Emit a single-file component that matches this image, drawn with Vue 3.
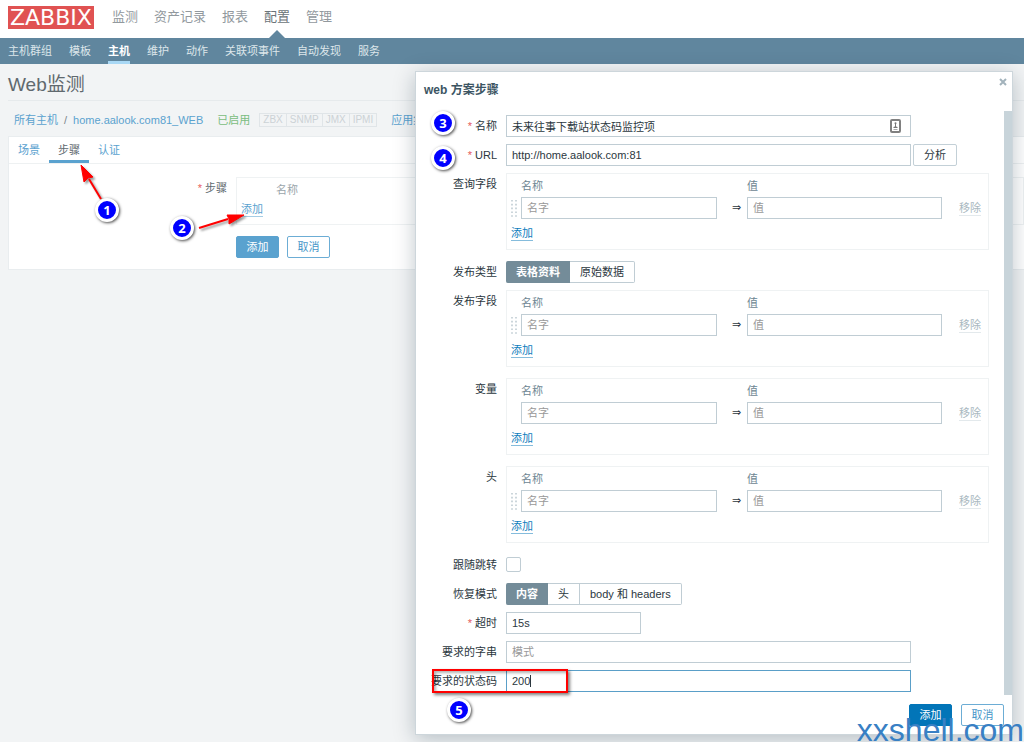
<script setup>
import { ref } from 'vue'

const mainMenu = ['监测', '资产记录', '报表', '配置', '管理']
const subMenu = ['主机群组', '模板', '主机', '维护', '动作', '关联项事件', '自动发现', '服务']
const interfaces = ['ZBX', 'SNMP', 'JMX', 'IPMI']
const tabs = ['场景', '步骤', '认证']

const activeTab = ref('步骤')
const dialogOpen = ref(true)

const name = ref('未来往事下载站状态码监控项')
const url = ref('http://home.aalook.com:81')
const postType = ref('form')
const followRedirects = ref(false)
const retrieveMode = ref('content')
const timeout = ref('15s')
const requiredString = ref('')
const statusCodes = ref('200')

const postTypes = [
  { value: 'form', label: '表格资料' },
  { value: 'raw', label: '原始数据' }
]

const retrieveModes = [
  { value: 'content', label: '内容' },
  { value: 'headers', label: '头' },
  { value: 'both', label: 'body 和 headers' }
]

const queryFields = { id: 'query', label: '查询字段', sortable: true }
const pairGroups = [
  { id: 'post', label: '发布字段', sortable: true },
  { id: 'variables', label: '变量', sortable: false },
  { id: 'headers', label: '头', sortable: true }
]

// the post type switch sits between the query fields and the other groups
const formRows = [queryFields, { id: 'post-type' }, ...pairGroups]
</script>

<template>
  <div class="page">
    <header class="top">
      <a href="#" class="logo">ZABBIX</a>
      <nav class="main-nav">
        <a
          v-for="item in mainMenu"
          :key="item"
          href="#"
          :class="{ active: item === '配置' }"
        >{{ item }}</a>
      </nav>
    </header>
    <nav class="sub-nav">
      <a
        v-for="item in subMenu"
        :key="item"
        href="#"
        :class="{ active: item === '主机' }"
      >{{ item }}</a>
    </nav>

    <main class="content">
      <h1>Web监测</h1>
      <div class="breadcrumbs">
        <a href="#">所有主机</a>
        <span class="slash">/</span>
        <a href="#">home.aalook.com81_WEB</a>
        <span class="enabled">已启用</span>
        <span class="interfaces">
          <span v-for="item in interfaces" :key="item">{{ item }}</span>
        </span>
        <a href="#">应用集</a>
      </div>

      <section class="panel">
        <div class="tabs">
          <button
            v-for="tab in tabs"
            :key="tab"
            type="button"
            :class="{ active: tab === activeTab }"
            @click="activeTab = tab"
          >{{ tab }}</button>
        </div>
        <div class="steps-form">
          <div class="steps-label"><span class="star">*</span> 步骤</div>
          <div class="steps-box">
            <div class="steps-head">名称</div>
            <a href="#" class="dotted" @click.prevent="dialogOpen = true">添加</a>
          </div>
          <div class="steps-actions">
            <button type="button" class="btn primary">添加</button>
            <button type="button" class="btn outline">取消</button>
          </div>
        </div>
      </section>
    </main>

    <div v-if="dialogOpen" class="dialog" role="dialog" aria-labelledby="dialog-title">
      <div class="dialog-header">
        <h2 id="dialog-title">web 方案步骤</h2>
        <button type="button" class="close" aria-label="关闭" @click="dialogOpen = false">
          <svg width="8" height="8" viewBox="0 0 8 8">
            <path d="M1 1L7 7M7 1L1 7" stroke="#a3b3bc" stroke-width="2" />
          </svg>
        </button>
      </div>

      <div class="dialog-body">
        <form class="form" @submit.prevent>
          <div class="row">
            <label for="name" class="label"><span class="star">*</span> 名称</label>
            <div class="field wide">
              <input id="name" v-model="name" type="text">
              <svg class="autofill" width="11" height="14" viewBox="0 0 11 14">
                <rect x="1" y="1" width="9" height="12" rx="1" fill="#fff" stroke="#808080" stroke-width="2" />
                <circle cx="5.5" cy="4.3" r="1" fill="#777" />
                <path d="M5 5h1v2.4l1.5 .6v1h-4v-1l1.5-.6z" fill="#777" />
                <path d="M3.5 10h4v1h-4z" fill="#aaa" />
              </svg>
            </div>
          </div>

          <div class="row">
            <label for="url" class="label"><span class="star">*</span> URL</label>
            <div class="field wide">
              <input id="url" v-model="url" type="text">
            </div>
            <button type="button" class="btn grey">分析</button>
          </div>

          <template v-for="row in formRows" :key="row.id">
            <div v-if="row.id === 'post-type'" class="row">
              <span class="label">发布类型</span>
              <div class="segmented" role="radiogroup" aria-label="发布类型">
                <label v-for="type in postTypes" :key="type.value" :class="{ on: postType === type.value }">
                  <input v-model="postType" type="radio" name="post-type" :value="type.value">
                  {{ type.label }}
                </label>
              </div>
            </div>
            <div v-else class="row">
              <span class="label">{{ row.label }}</span>
              <div class="pairs">
                <div class="pairs-grid">
                  <label class="head name-head" :for="row.id + '-name'">名称</label>
                  <label class="head value-head" :for="row.id + '-value'">值</label>
                  <span class="handle">
                    <svg v-if="row.sortable" width="6" height="17" viewBox="0 0 6 17">
                      <path
                        d="M1 0V17M5 0V17"
                        stroke="#ccd6db"
                        stroke-width="2"
                        stroke-dasharray="1.6 2.2"
                      />
                    </svg>
                  </span>
                  <input :id="row.id + '-name'" type="text" placeholder="名字">
                  <span class="arrow">⇒</span>
                  <input :id="row.id + '-value'" type="text" placeholder="值">
                  <a href="#" class="remove" @click.prevent>移除</a>
                </div>
                <a href="#" class="dotted" @click.prevent>添加</a>
              </div>
            </div>
          </template>

          <div class="row">
            <label for="follow" class="label">跟随跳转</label>
            <input id="follow" v-model="followRedirects" type="checkbox" class="checkbox">
          </div>

          <div class="row">
            <span class="label">恢复模式</span>
            <div class="segmented" role="radiogroup" aria-label="恢复模式">
              <label v-for="mode in retrieveModes" :key="mode.value" :class="{ on: retrieveMode === mode.value }">
                <input v-model="retrieveMode" type="radio" name="retrieve-mode" :value="mode.value">
                {{ mode.label }}
              </label>
            </div>
          </div>

          <div class="row">
            <label for="timeout" class="label"><span class="star">*</span> 超时</label>
            <div class="field narrow">
              <input id="timeout" v-model="timeout" type="text">
            </div>
          </div>

          <div class="row">
            <label for="required" class="label">要求的字串</label>
            <div class="field wide">
              <input id="required" v-model="requiredString" type="text" placeholder="模式">
            </div>
          </div>

          <div class="row">
            <label for="status" class="label">要求的状态码</label>
            <div class="field wide focused">
              <input id="status" v-model="statusCodes" type="text">
              <span class="caret"></span>
            </div>
          </div>
        </form>
        <div class="scrollbar"></div>
      </div>

      <div class="dialog-footer">
        <button type="button" class="btn primary strong">添加</button>
        <button type="button" class="btn outline">取消</button>
      </div>

      <span class="mark mark-3">3</span>
      <span class="mark mark-4">4</span>
      <span class="mark mark-5">5</span>
      <span class="highlight"></span>
    </div>

    <svg class="arrows" width="260" height="240" viewBox="0 0 260 240">
      <g fill="#f00" stroke="#f00">
        <path d="M101 199L89 179" stroke-width="2" />
        <path d="M81 165L84 182L88 178L93 177Z" stroke-width="1" />
        <path d="M199 228L228 219" stroke-width="2" />
        <path d="M244 215L227 215L229 219L229 224Z" stroke-width="1" />
      </g>
    </svg>
    <span class="mark mark-1">1</span>
    <span class="mark mark-2">2</span>

    <div class="watermark">xxshell.com</div>
  </div>
</template>

<style>
body {
  background: #f2f4f5;
}
</style>

<style scoped>
.page {
  position: relative;
  min-height: 100vh;
  overflow: hidden;
  font-family: "Liberation Sans", Arial, "Noto Sans CJK SC", sans-serif;
  font-size: 11px;
  line-height: 16px;
  color: #2b373e;
}

.page * {
  box-sizing: border-box;
}

a {
  color: #5aa2cf;
  text-decoration: none;
}

button,
input {
  font-family: inherit;
  font-size: 11px;
}

button {
  padding: 0;
  cursor: pointer;
}

.top {
  display: flex;
  align-items: center;
  gap: 18px;
  height: 38px;
  padding: 0 8px 4px;
  background: #fff;
}

.logo {
  padding: 0 2px;
  background: #e05252;
  color: #fff;
  font-family: "DejaVu Sans", sans-serif;
  font-size: 22px;
  line-height: 23px;
}

.main-nav {
  display: flex;
  align-self: stretch;
  gap: 16px;
}

.main-nav a {
  position: relative;
  padding-top: 9px;
  font-size: 13px;
  color: #92999e;
}

.main-nav a.active {
  color: #6b7479;
}

.main-nav a.active::after {
  content: "";
  position: absolute;
  bottom: -4px;
  left: 50%;
  margin-left: -8px;
  border: 8px solid transparent;
  border-top: 0;
  border-bottom-color: #60869e;
}

.sub-nav {
  display: flex;
  gap: 17px;
  height: 26px;
  padding: 0 8px;
  background: #60869e;
}

.sub-nav a {
  padding-top: 5px;
  color: #dde6eb;
}

.sub-nav a.active {
  border-bottom: 3px solid #a9d8f5;
  color: #fff;
  font-weight: 700;
}

.content {
  padding: 8px 0 0 8px;
}

h1 {
  margin: 0;
  padding-bottom: 3px;
  border-bottom: 1px solid #e6eaec;
  font-size: 19px;
  font-weight: 400;
  line-height: 25px;
  color: #60696e;
}

.breadcrumbs {
  display: flex;
  align-items: center;
  height: 35px;
  padding: 3px 6px 0;
}

.breadcrumbs a {
  white-space: nowrap;
}

.slash {
  margin: 0 6px;
  color: #7a858b;
}

.enabled {
  margin: 0 9px 0 14px;
  color: #7bbd80;
}

.interfaces {
  display: flex;
  margin-right: 14px;
  border: 1px solid #e0e5e8;
  font-size: 10px;
  line-height: 12px;
  color: #ccd2d5;
}

.interfaces span {
  padding: 0 3px;
}

.interfaces span + span {
  border-left: 1px solid #e0e5e8;
}

.panel {
  height: 134px;
  background: #fff;
  border: 1px solid #e9edef;
  border-right: 0;
}

.tabs {
  display: flex;
  height: 27px;
  border-bottom: 1px solid #eef1f2;
}

.tabs button {
  padding: 0 9px;
  background: none;
  border: 0;
  border-bottom: 3px solid transparent;
  color: #5aa2cf;
}

.tabs button.active {
  border-bottom-color: #5aa2cf;
  color: #60696e;
}

.steps-form {
  display: grid;
  grid-template-columns: 218px 1fr;
  column-gap: 9px;
  row-gap: 11px;
  padding-top: 13px;
}

.steps-label {
  padding-top: 3px;
  text-align: right;
  color: #60696e;
}

.star {
  color: #e8605c;
}

.steps-box {
  height: 48px;
  padding: 4px;
  border: 1px solid #eff2f3;
}

.steps-head {
  padding-left: 35px;
  margin-bottom: 3px;
  color: #9aa5ab;
}

.dotted {
  display: inline-block;
  border-bottom: 1px solid #a5cde5;
  line-height: 14px;
}

.steps-actions {
  grid-column: 2;
  display: flex;
  gap: 8px;
}

.btn {
  width: 43px;
  height: 22px;
  border: 1px solid #6cadd5;
  border-radius: 2px;
  background: #fff;
  line-height: 16px;
}

.btn.primary {
  background: #5aa2cf;
  border-color: #5aa2cf;
  color: #fff;
}

.btn.primary.strong {
  background: #0275b8;
  border-color: #0275b8;
}

.btn.outline {
  color: #4796c8;
}

.btn.grey {
  margin-left: 2px;
  width: 44px;
  border-color: #c3d0d7;
  color: #2b373e;
}

.dialog {
  position: absolute;
  top: 71px;
  left: 415px;
  right: 11px;
  background: #fff;
  border: 1px solid #cdd6db;
  box-shadow: 0 4px 20px rgba(0, 30, 50, 0.25);
}

.dialog-header {
  display: flex;
  justify-content: space-between;
  align-items: flex-start;
  height: 39px;
  padding: 6px 5px 0 8px;
}

h2 {
  margin: 0;
  padding-top: 4px;
  font-size: 12px;
  line-height: 16px;
  color: #3c5563;
}

.close {
  display: flex;
  background: none;
  border: 0;
}

.dialog-body {
  display: flex;
  justify-content: space-between;
}

.scrollbar {
  width: 8px;
  background: #c8d4da;
}

.form {
  display: flex;
  flex-direction: column;
  gap: 7px;
  padding: 4px 0 3px;
}

.row {
  display: flex;
  align-items: flex-start;
}

.label {
  width: 81px;
  margin-right: 9px;
  line-height: 22px;
  text-align: right;
  white-space: nowrap;
}

.dialog .star {
  color: #e45959;
}

.field {
  position: relative;
}

.field.wide {
  width: 405px;
}

.field.narrow {
  width: 135px;
}

input[type="text"] {
  display: block;
  width: 100%;
  height: 22px;
  padding: 0 5px 1px;
  border: 1px solid #c0cdd4;
  border-radius: 0;
  background: #fff;
  color: #2b373e;
  outline: none;
}

input[type="text"]:focus,
.focused input[type="text"] {
  border-color: #5a9fc8;
}

input::placeholder {
  color: #999;
}

.autofill {
  position: absolute;
  top: 4px;
  right: 10px;
}

.caret {
  position: absolute;
  top: 5px;
  left: 24px;
  width: 1px;
  height: 12px;
  background: #2b373e;
}

.pairs {
  width: 483px;
  height: 77px;
  margin-bottom: 4px;
  padding: 4px;
  border: 1px solid #eff2f3;
}

.pairs-grid {
  display: grid;
  grid-template-columns: 10px 196px 30px 195px 1fr;
  row-gap: 3px;
  align-items: center;
  margin-bottom: 6px;
}

.head {
  color: #6d8692;
}

.name-head {
  grid-column: 2;
}

.value-head {
  grid-column: 4 / 6;
}

.handle {
  display: flex;
}

.arrow {
  padding-left: 15px;
  font-family: "DejaVu Sans", sans-serif;
}

.remove {
  justify-self: start;
  margin-left: 17px;
  border-bottom: 1px solid #e3e9ec;
  line-height: 14px;
  color: #a9b8c0;
}

.dialog .dotted {
  color: #0f7dbd;
  border-bottom-color: #85bcdc;
}

.segmented {
  display: flex;
}

.segmented label {
  position: relative;
  height: 22px;
  padding: 0 10px;
  border: 1px solid #c0cdd4;
  border-left-width: 0;
  line-height: 20px;
  cursor: pointer;
}

.segmented label:last-child {
  border-radius: 0 2px 2px 0;
}

.segmented label.on {
  padding-right: 9px;
  background: #748c99;
  border-color: #748c99;
  border-radius: 2px 0 0 2px;
  color: #fff;
  font-weight: 700;
}

.segmented input {
  position: absolute;
  inset: 0;
  margin: 0;
  opacity: 0;
}

.checkbox {
  appearance: none;
  width: 15px;
  height: 15px;
  margin: 3px 0 4px;
  border: 1px solid #c0cdd4;
  border-radius: 2px;
  background: #fff;
}

.checkbox:checked {
  background: #0275b8;
}

.dialog-footer {
  display: flex;
  justify-content: flex-end;
  gap: 9px;
  padding: 9px 8px 8px;
}

.mark {
  position: absolute;
  width: 24px;
  height: 24px;
  border: 3px solid #fff;
  border-radius: 50%;
  background: #00f;
  box-shadow: 1px 1px 3px rgba(0, 0, 0, 0.7);
  color: #fff;
  font-family: "Noto Sans", "Open Sans", sans-serif;
  font-size: 13px;
  font-weight: 700;
  line-height: 18px;
  text-align: center;
}

.mark-1 {
  top: 198px;
  left: 95px;
}

.mark-2 {
  top: 216px;
  left: 170px;
}

.mark-3 {
  top: 39px;
  left: 15px;
}

.mark-4 {
  top: 74px;
  left: 15px;
}

.mark-5 {
  top: 626px;
  left: 31px;
}

.highlight {
  position: absolute;
  top: 597px;
  left: 16px;
  width: 136px;
  height: 24px;
  border: 2px solid #f00;
  box-shadow: 2px 2px 3px rgba(0, 0, 0, 0.5), inset 2px 2px 3px rgba(0, 0, 0, 0.3);
  pointer-events: none;
}

.arrows {
  position: absolute;
  top: 0;
  left: 0;
  filter: drop-shadow(2px 2px 1px rgba(0, 0, 0, 0.4));
  pointer-events: none;
}

.watermark {
  position: absolute;
  right: 0;
  bottom: 0;
  font-size: 32px;
  line-height: 24px;
  color: #3880c4;
  pointer-events: none;
}
</style>
